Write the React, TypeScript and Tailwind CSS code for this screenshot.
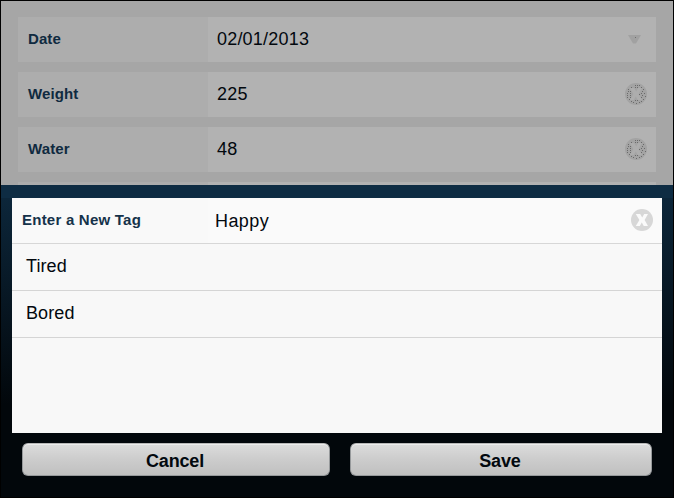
type RowProps = { label: string; value: string; kind: "select" | "clear" };

const RIM_DOTS = [
  [10, 2], [12, 2], [14, 2],
  [6, 4], [10, 4], [12, 4], [16, 4],
  [3, 6], [18, 6],
  [3, 8], [5, 8], [17, 8],
  [2, 10], [5, 10], [16, 10], [19, 10],
  [2, 12], [5, 12], [14, 11], [17, 12],
  [2, 14], [5, 14], [16, 14], [20, 13],
  [4, 16], [18, 16],
  [6, 18], [10, 17], [12, 17], [16, 18],
  [8, 19], [11, 20], [14, 19],
];

function MutedClearIcon() {
  return (
    <svg className="mr-[9px] mb-px" width="22" height="22" viewBox="0 0 22 22">
      <circle cx="11" cy="11" r="11" fill="#a3a3a3" />
      <path d="M4.8 4.9H9.2L11.2 8.4L13.2 4.9H17L13.6 10.9L17 17H12.8L10.8 13.5L8.8 17H4.8L8.4 10.9Z" fill="#adadad" />
      {RIM_DOTS.map(([x, y]) => (
        <rect key={`${x}-${y}`} x={x} y={y} width="1" height="1" fill="#6a6a6a" />
      ))}
    </svg>
  );
}

function ClearIcon() {
  return (
    <svg className="mr-[9px] mb-px" width="22" height="22" viewBox="0 0 22 22">
      <circle cx="11" cy="11" r="11" fill="#d7d7d7" />
      <path d="M4.8 4.9H9.2L11.2 8.4L13.2 4.9H17L13.6 10.9L17 17H12.8L10.8 13.5L8.8 17H4.8L8.4 10.9Z" fill="#fafafa" />
    </svg>
  );
}

function FieldRow({ label, value, kind }: RowProps) {
  return (
    <div className="flex h-[45px] shrink-0 bg-[#b2b2b2]">
      <div className="w-[190px] bg-[#adadad] pl-[10px] text-[15px] leading-[43px] font-bold tracking-[0.1px] text-[#0f2a40]">
        {label}
      </div>
      <div className="flex flex-1 items-center justify-between pl-[9px]">
        <span className="text-[18px] leading-[45px] tracking-[0.2px] text-[#02080e]">{value}</span>
        {kind === "select" ? (
          <svg className="mr-[15px]" width="13" height="9" viewBox="0 0 13 9">
            <path d="M0 0H13L8 8.5H5Z" fill="#a1a1a1" />
            <rect x="7" y="2" width="1" height="1" fill="#6e6e6e" />
          </svg>
        ) : (
          <MutedClearIcon />
        )}
      </div>
    </div>
  );
}

function SheetButton({ label, width }: { label: string; width: string }) {
  return (
    <button
      className={`${width} h-[33px] rounded-[6px] border border-[#96999b] border-t-[#b8b8b8] bg-linear-to-b from-[#dcdcdc] via-[#cccccc] to-[#c0c0c0] pt-[2px] text-[18px] leading-[30px] font-bold tracking-[-0.15px] text-[#02080e] shadow-[inset_0_1px_0_#ececec]`}
    >
      <span className="mr-[2px]">{label}</span>
    </button>
  );
}

export default function App() {
  return (
    <div className="flex h-[498px] w-[674px] flex-col overflow-hidden border border-black bg-[#02070b] font-['Liberation_Sans',Arial,sans-serif]">
      <div className="flex h-[184px] shrink-0 flex-col gap-[10px] overflow-hidden bg-[#a6a6a6] pt-4 pr-[17px] pl-[17px]">
        <FieldRow label="Date" value="02/01/2013" kind="select" />
        <FieldRow label="Weight" value="225" kind="clear" />
        <FieldRow label="Water" value="48" kind="clear" />
        <FieldRow label="" value="" kind="select" />
      </div>
      <div className="flex flex-1 flex-col bg-[linear-gradient(to_bottom,#0c263a_13px,#02070b_220px)]">
        <div className="h-[13px] shrink-0 bg-[#0e2c43]" />
        <div className="mx-[11px] h-[235px] w-[650px] shrink-0 bg-[#f8f8f8]">
          <div className="flex h-[46px] border-b border-[#d7d7d7] bg-[#fafafa]">
            <div className="w-[196px] bg-[#f9f9f9] pl-[10px] text-[15px] leading-[43px] font-bold tracking-[0.23px] text-[#15324a]">
              Enter a New Tag
            </div>
            <div className="flex flex-1 items-center justify-between pl-[7px]">
              <span className="pt-px text-[18px] leading-[46px] tracking-[0.4px] text-[#02080e]">Happy</span>
              <ClearIcon />
            </div>
          </div>
          <div className="h-[47px] border-b border-[#d5d5d5] pl-[14px] text-[18px] leading-[44px] tracking-[0.1px] text-[#02080e]">Tired</div>
          <div className="h-[47px] border-b border-[#d5d5d5] pl-[14px] text-[18px] leading-[44px] tracking-[0.1px] text-[#02080e]">Bored</div>
        </div>
        <div className="flex flex-1 items-start justify-between bg-[#02070b] pt-[10px] pr-[21px] pl-[21px]">
          <SheetButton label="Cancel" width="w-[308px]" />
          <SheetButton label="Save" width="w-[302px]" />
        </div>
      </div>
    </div>
  );
}
